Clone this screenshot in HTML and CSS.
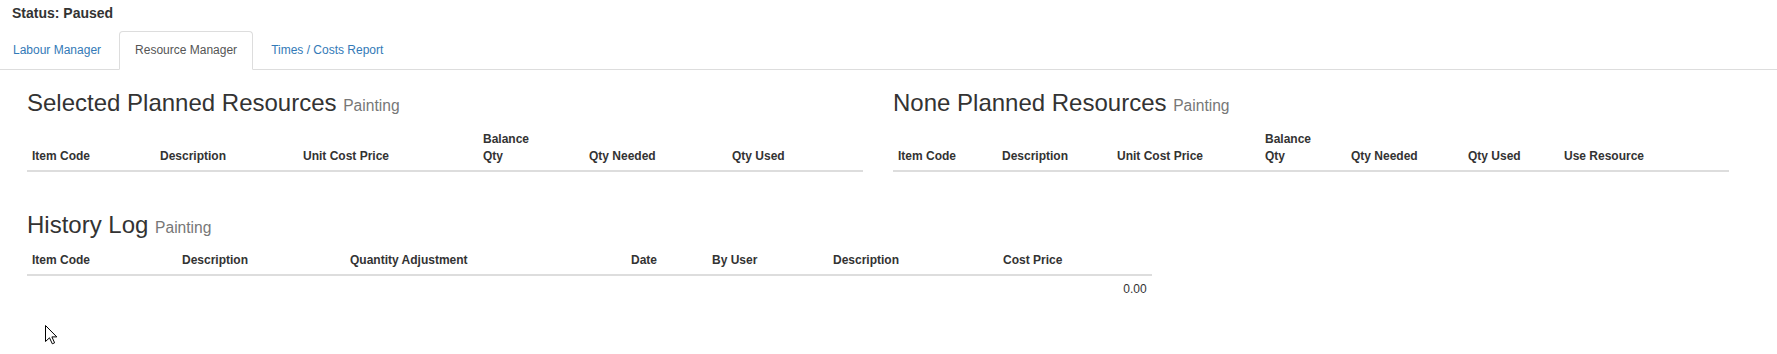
FILE: index.html
```html
<!DOCTYPE html>
<html lang="en">
<head>
  <meta charset="UTF-8">
  <title>Resource Manager</title>
  <link rel="stylesheet" href="styles.css">
</head>
<body>

  <!-- status -->
  <div class="status">Status: Paused</div>

  <!-- tabs -->
  <ul class="nav-tabs">
    <li><a href="#">Labour Manager</a></li>
    <li class="active"><a href="#">Resource Manager</a></li>
    <li><a href="#">Times / Costs Report</a></li>
  </ul>

  <div class="tab-content">
    <div class="row">
      <div class="col-6">
        <h3>Selected Planned Resources <small>Painting</small></h3>
        <table class="table tbl-selected">
          <thead>
            <tr>
              <th>Item Code</th>
              <th>Description</th>
              <th>Unit Cost Price</th>
              <th>Balance<br>Qty</th>
              <th>Qty Needed</th>
              <th>Qty Used</th>
            </tr>
          </thead>
          <tbody></tbody>
        </table>
      </div>
      <div class="col-6">
        <h3>None Planned Resources <small>Painting</small></h3>
        <table class="table tbl-none">
          <thead>
            <tr>
              <th>Item Code</th>
              <th>Description</th>
              <th>Unit Cost Price</th>
              <th>Balance<br>Qty</th>
              <th>Qty Needed</th>
              <th>Qty Used</th>
              <th>Use Resource</th>
            </tr>
          </thead>
          <tbody></tbody>
        </table>
      </div>
    </div>

    <div class="row">
      <div class="col-8">
        <h3>History Log <small>Painting</small></h3>
        <table class="table tbl-history">
          <thead>
            <tr>
              <th>Item Code</th>
              <th>Description</th>
              <th>Quantity Adjustment</th>
              <th>Date</th>
              <th>By User</th>
              <th>Description</th>
              <th>Cost Price</th>
            </tr>
          </thead>
          <tbody>
            <tr>
              <td></td>
              <td></td>
              <td></td>
              <td></td>
              <td></td>
              <td></td>
              <td class="num">0.00</td>
            </tr>
          </tbody>
        </table>
      </div>
    </div>
  </div>

  <!-- mouse pointer from the screenshot -->
  <svg class="cursor" width="13" height="20" viewBox="0 0 13 20">
    <path d="M0.5 0.5 L0.5 16.5 L4.5 12.8 L7.3 18.8 L9.6 17.8 L6.9 11.9 L11.8 11.9 Z" fill="#fff" stroke="#000" stroke-width="1"/>
  </svg>

</body>
</html>
```

FILE: styles.css
```css
body {
  font-family: "Liberation Sans", Arial, sans-serif;
  font-size: 12px;
  line-height: 1.42857;
  color: #333;
  background-color: #fff;
  margin: 0;
  padding: 0;
}
/* status */
.status {
  font-size: 14px;
  font-weight: bold;
  line-height: 20px;
  padding: 3px 0 0 12px;
  margin-bottom: 8px;
}
/* tabs */
.nav-tabs {
  list-style: none;
  margin: 0 0 0 -3px;
  padding: 0;
  display: flex;
  border-bottom: 1px solid #ddd;
}
.nav-tabs li {
  margin-bottom: -1px;
}
.nav-tabs a {
  display: block;
  margin-right: 2px;
  padding: 10px 15px;
  border: 1px solid transparent;
  border-radius: 4px 4px 0 0;
  color: #337ab7;
  text-decoration: none;
}
.nav-tabs .active a {
  color: #555;
  background-color: #fff;
  border-color: #ddd;
  border-bottom-color: transparent;
}
/* content */
.tab-content {
  width: 1732px;
  margin-left: 12px;
}
.row {
  display: flex;
}
.col-6 {
  width: 50%;
  padding: 0 15px;
  box-sizing: border-box;
}
.col-8 {
  width: 66.6667%;
  padding: 0 15px;
  box-sizing: border-box;
}
h3 {
  font-size: 24px;
  font-weight: normal;
  line-height: 1.1;
  margin: 20px 0 9px;
}
h3 small {
  font-size: 65%;
  color: #777;
}
/* tables (widths below are content widths, padding 5px each side) */
.table {
  width: 100%;
  border-collapse: collapse;
  table-layout: fixed;
  margin-bottom: 20px;
}
.table th,
.table td {
  padding: 5px;
  text-align: left;
  line-height: 1.42857;
}
.table th {
  font-weight: bold;
  vertical-align: bottom;
  border-bottom: 2px solid #ddd;
}
.table td.num {
  text-align: right;
}
.tbl-selected th:nth-child(1) { width: 118px; }
.tbl-selected th:nth-child(2) { width: 133px; }
.tbl-selected th:nth-child(3) { width: 170px; }
.tbl-selected th:nth-child(4) { width: 96px; }
.tbl-selected th:nth-child(5) { width: 133px; }
.tbl-none th:nth-child(1) { width: 94px; }
.tbl-none th:nth-child(2) { width: 105px; }
.tbl-none th:nth-child(3) { width: 138px; }
.tbl-none th:nth-child(4) { width: 76px; }
.tbl-none th:nth-child(5) { width: 107px; }
.tbl-none th:nth-child(6) { width: 86px; }
.tbl-history th:nth-child(1) { width: 140px; }
.tbl-history th:nth-child(2) { width: 158px; }
.tbl-history th:nth-child(3) { width: 271px; }
.tbl-history th:nth-child(4) { width: 71px; }
.tbl-history th:nth-child(5) { width: 111px; }
.tbl-history th:nth-child(6) { width: 160px; }
/* pointer */
.cursor {
  position: absolute;
  left: 45px;
  top: 325px;
}
```
